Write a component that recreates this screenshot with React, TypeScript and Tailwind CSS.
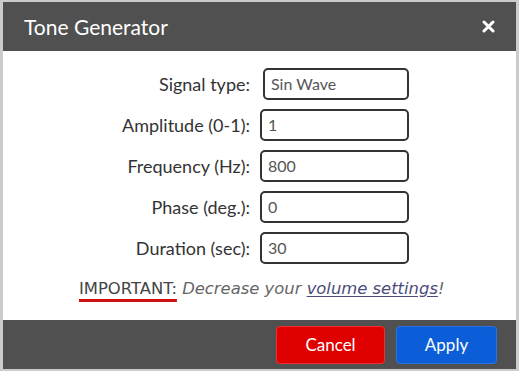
import React from 'react'

const fields = [
  {label: 'Signal type:', value: 'Sin Wave', shift: true},
  {label: 'Amplitude (0-1):', value: '1'},
  {label: 'Frequency (Hz):', value: '800'},
  {label: 'Phase (deg.):', value: '0'},
  {label: 'Duration (sec):', value: '30'},
]

export default function App() {
  return (
    <div className="flex h-[371px] w-[519px] flex-col border-x-[3px] border-y-2 border-[#cbcbcb] bg-white font-['Lato',sans-serif]">
      <header className="flex h-[49px] shrink-0 items-center justify-between bg-[#505050] pl-[21px] pr-[21px] text-white">
        <h1 className="text-[21px] leading-none">Tone Generator</h1>
        <svg width="13" height="13" viewBox="0 0 13 13" aria-hidden>
          <path d="M2 2 L11 11 M11 2 L2 11" stroke="white" strokeWidth="3" strokeLinecap="round" />
        </svg>
      </header>

      <main className="flex flex-1 flex-col pt-[17px]">
        <div className="grid grid-cols-[247px_149px] items-center gap-x-[10px] gap-y-[9px]">
          {fields.map((f) => (
            <React.Fragment key={f.label}>
              <label className="text-right text-[18px] text-[#333]">{f.label}</label>
              <div
                className={[
                  'flex h-[32px] items-center rounded-[5px] border-2 border-[#333] px-[6px] text-[16px] text-[#555]',
                  f.shift ? 'ml-[3px]' : '',
                ].join(' ')}
              >
                {f.value}
              </div>
            </React.Fragment>
          ))}
        </div>

        <p className="mt-[13px] pl-[76px] font-['DejaVu_Sans',sans-serif] text-[16.4px] text-[#555]">
          <span className="text-[#444] underline decoration-[#d01010] decoration-[3px] underline-offset-[5px]">
            IMPORTANT:
          </span>{' '}
          <em className="text-[#666]">
            Decrease your{' '}
            <a href="#" className="text-[#4b4b7a] underline underline-offset-2">
              volume settings
            </a>
            !
          </em>
        </p>
      </main>

      <footer className="flex h-[49px] shrink-0 items-center justify-end gap-[11px] bg-[#505050] pr-[19px]">
        <button className="h-[38px] w-[109px] rounded-[4px] border border-[#f03030] bg-[#e00000] text-[17px] text-white">
          Cancel
        </button>
        <button className="h-[38px] w-[101px] rounded-[4px] border border-[#2a74e0] bg-[#0b5ed7] text-[17px] text-white">
          Apply
        </button>
      </footer>
    </div>
  )
}
